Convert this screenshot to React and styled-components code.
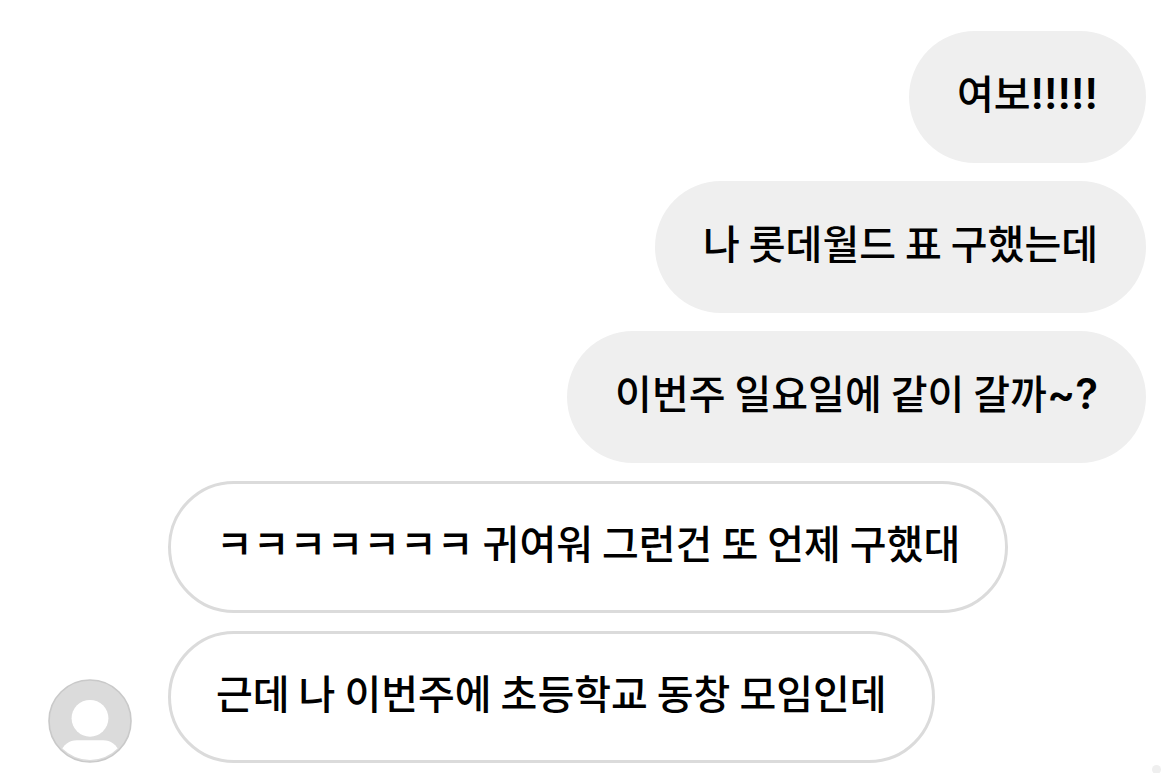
import React from "react";
import styled, { createGlobalStyle } from "styled-components";

const GlobalStyle = createGlobalStyle`
  *, *::before, *::after { box-sizing: border-box; }
  body {
    margin: 0;
    background: #fff;
    color: #000;
    font-family: "Noto Sans CJK KR", sans-serif;
  }
`;

const Chat = styled.main`
  position: relative;
  display: flex;
  flex-direction: column;
  gap: 18px;
  padding: 31px 24px 10px 48px;
  overflow: hidden;
`;

const Row = styled.div`
  display: flex;
  align-items: flex-end;
  justify-content: ${({ $mine }) => ($mine ? "flex-end" : "flex-start")};
  gap: 36px;
`;

const AvatarSlot = styled.div`
  flex: none;
  width: 84px;
`;

const Avatar = styled.svg`
  display: block;
  width: 84px;
  height: 84px;
`;

const Bubble = styled.p`
  margin: 0;
  height: 132px;
  padding: ${({ $mine }) => ($mine ? "31px 48px 41px" : "28px 45px 38px")};
  border: ${({ $mine }) => ($mine ? "0" : "3px solid #dbdbdb")};
  border-radius: 66px;
  background: ${({ $mine }) => ($mine ? "#efefef" : "#fff")};
  font-size: 40px;
  font-weight: 500;
  line-height: 60px;
  white-space: nowrap;
`;

const Punctuation = styled.span`
  font-family: Inter, sans-serif;
  font-size: 42px;
  font-weight: 600;
  line-height: 1;
`;

const Dot = styled.span`
  position: absolute;
  right: 9px;
  bottom: -1px;
  width: 9px;
  height: 9px;
  border-radius: 50%;
  background: #efefef;
`;

const messages = [
  { mine: true, text: "여보", end: "!!!!!" },
  { mine: true, text: "나 롯데월드 표 구했는데" },
  { mine: true, text: "이번주 일요일에 같이 갈까", end: "~?" },
  { mine: false, text: "ㅋㅋㅋㅋㅋㅋㅋ 귀여워 그런건 또 언제 구했대" },
  { mine: false, text: "근데 나 이번주에 초등학교 동창 모임인데", avatar: true },
];

function ProfileIcon() {
  return (
    <Avatar viewBox="0 0 84 84" role="img" aria-label="프로필">
      <defs>
        <clipPath id="face"><circle cx="42" cy="42" r="39" /></clipPath>
      </defs>
      <circle cx="42" cy="42" r="41" fill="#dbdbdb" stroke="#c9c9c9" strokeWidth="1.6" />
      <g clipPath="url(#face)" fill="#fff">
        <circle cx="42" cy="39.3" r="18.4" />
        <path d="M11 75C16 65 21 61.2 29 61.2H55C63 61.2 68 65 73 75V84H11Z" />
      </g>
    </Avatar>
  );
}

export default function App() {
  return (
    <>
      <GlobalStyle />
      <Chat>
        {messages.map(({ mine, text, end, avatar }) => (
          <Row key={text} $mine={mine}>
            {!mine && <AvatarSlot>{avatar && <ProfileIcon />}</AvatarSlot>}
            <Bubble $mine={mine}>
              {text}
              {end && <Punctuation>{end}</Punctuation>}
            </Bubble>
          </Row>
        ))}
        <Dot aria-hidden="true" />
      </Chat>
    </>
  );
}
